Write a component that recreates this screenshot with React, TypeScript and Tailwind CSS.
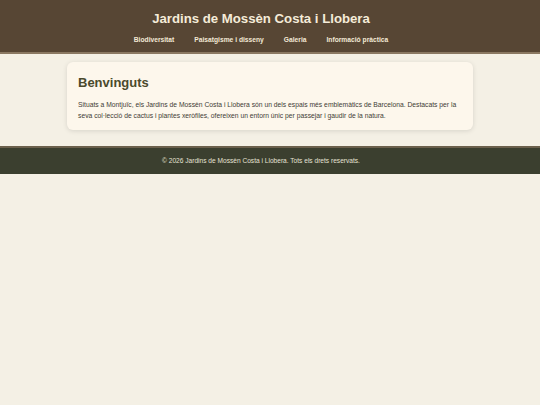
const navItems = ["Biodiversitat", "Paisatgisme i disseny", "Galeria", "Informació pràctica"];

export default function App() {
  return (
    <div className="min-h-[405px] bg-[#f4f0e5] font-['Liberation_Sans',Arial,sans-serif]">
      <header className="bg-[#574634] border-b-2 border-[#8a7862] pr-[18px] pt-[11px] pb-[8px] text-center">
        <h1 className="text-[13.2px] leading-[16px] font-bold text-[#f5ecd9]">
          Jardins de Mossèn Costa i Llobera
        </h1>
        <nav className="mt-[8px] flex justify-center gap-[20px]">
          {navItems.map((item) => (
            <a key={item} href="#" className="text-[6.7px] leading-[9px] font-bold text-[#f3e9d6]">
              {item}
            </a>
          ))}
        </nav>
      </header>

      <main className="px-[67px] pt-[8px] pb-[16px]">
        <section className="rounded-[6px] bg-[#fdf7ec] px-[11px] pt-[13px] pb-[9px] shadow-[0_1px_5px_rgba(0,0,0,0.12)]">
          <h2 className="text-[13px] leading-[16px] font-bold text-[#4b4a2c]">Benvinguts</h2>
          <p className="mt-[8px] text-[6.75px] leading-[11px] text-[#3f3c36]">
            Situats a Montjuïc, els Jardins de Mossèn Costa i Llobera són un dels espais més emblemàtics de Barcelona. Destacats per la seva col·lecció de cactus i plantes xeròfiles, ofereixen un entorn únic per passejar i gaudir de la natura.
          </p>
        </section>
      </main>

      <footer className="bg-[#3b3f2f] border-t-2 border-[#6b604c] h-[28px] pr-[18px] flex items-center justify-center">
        <p className="text-[6.6px] text-[#e6e2d4]">© 2026 Jardins de Mossèn Costa i Llobera. Tots els drets reservats.</p>
      </footer>
    </div>
  );
}
